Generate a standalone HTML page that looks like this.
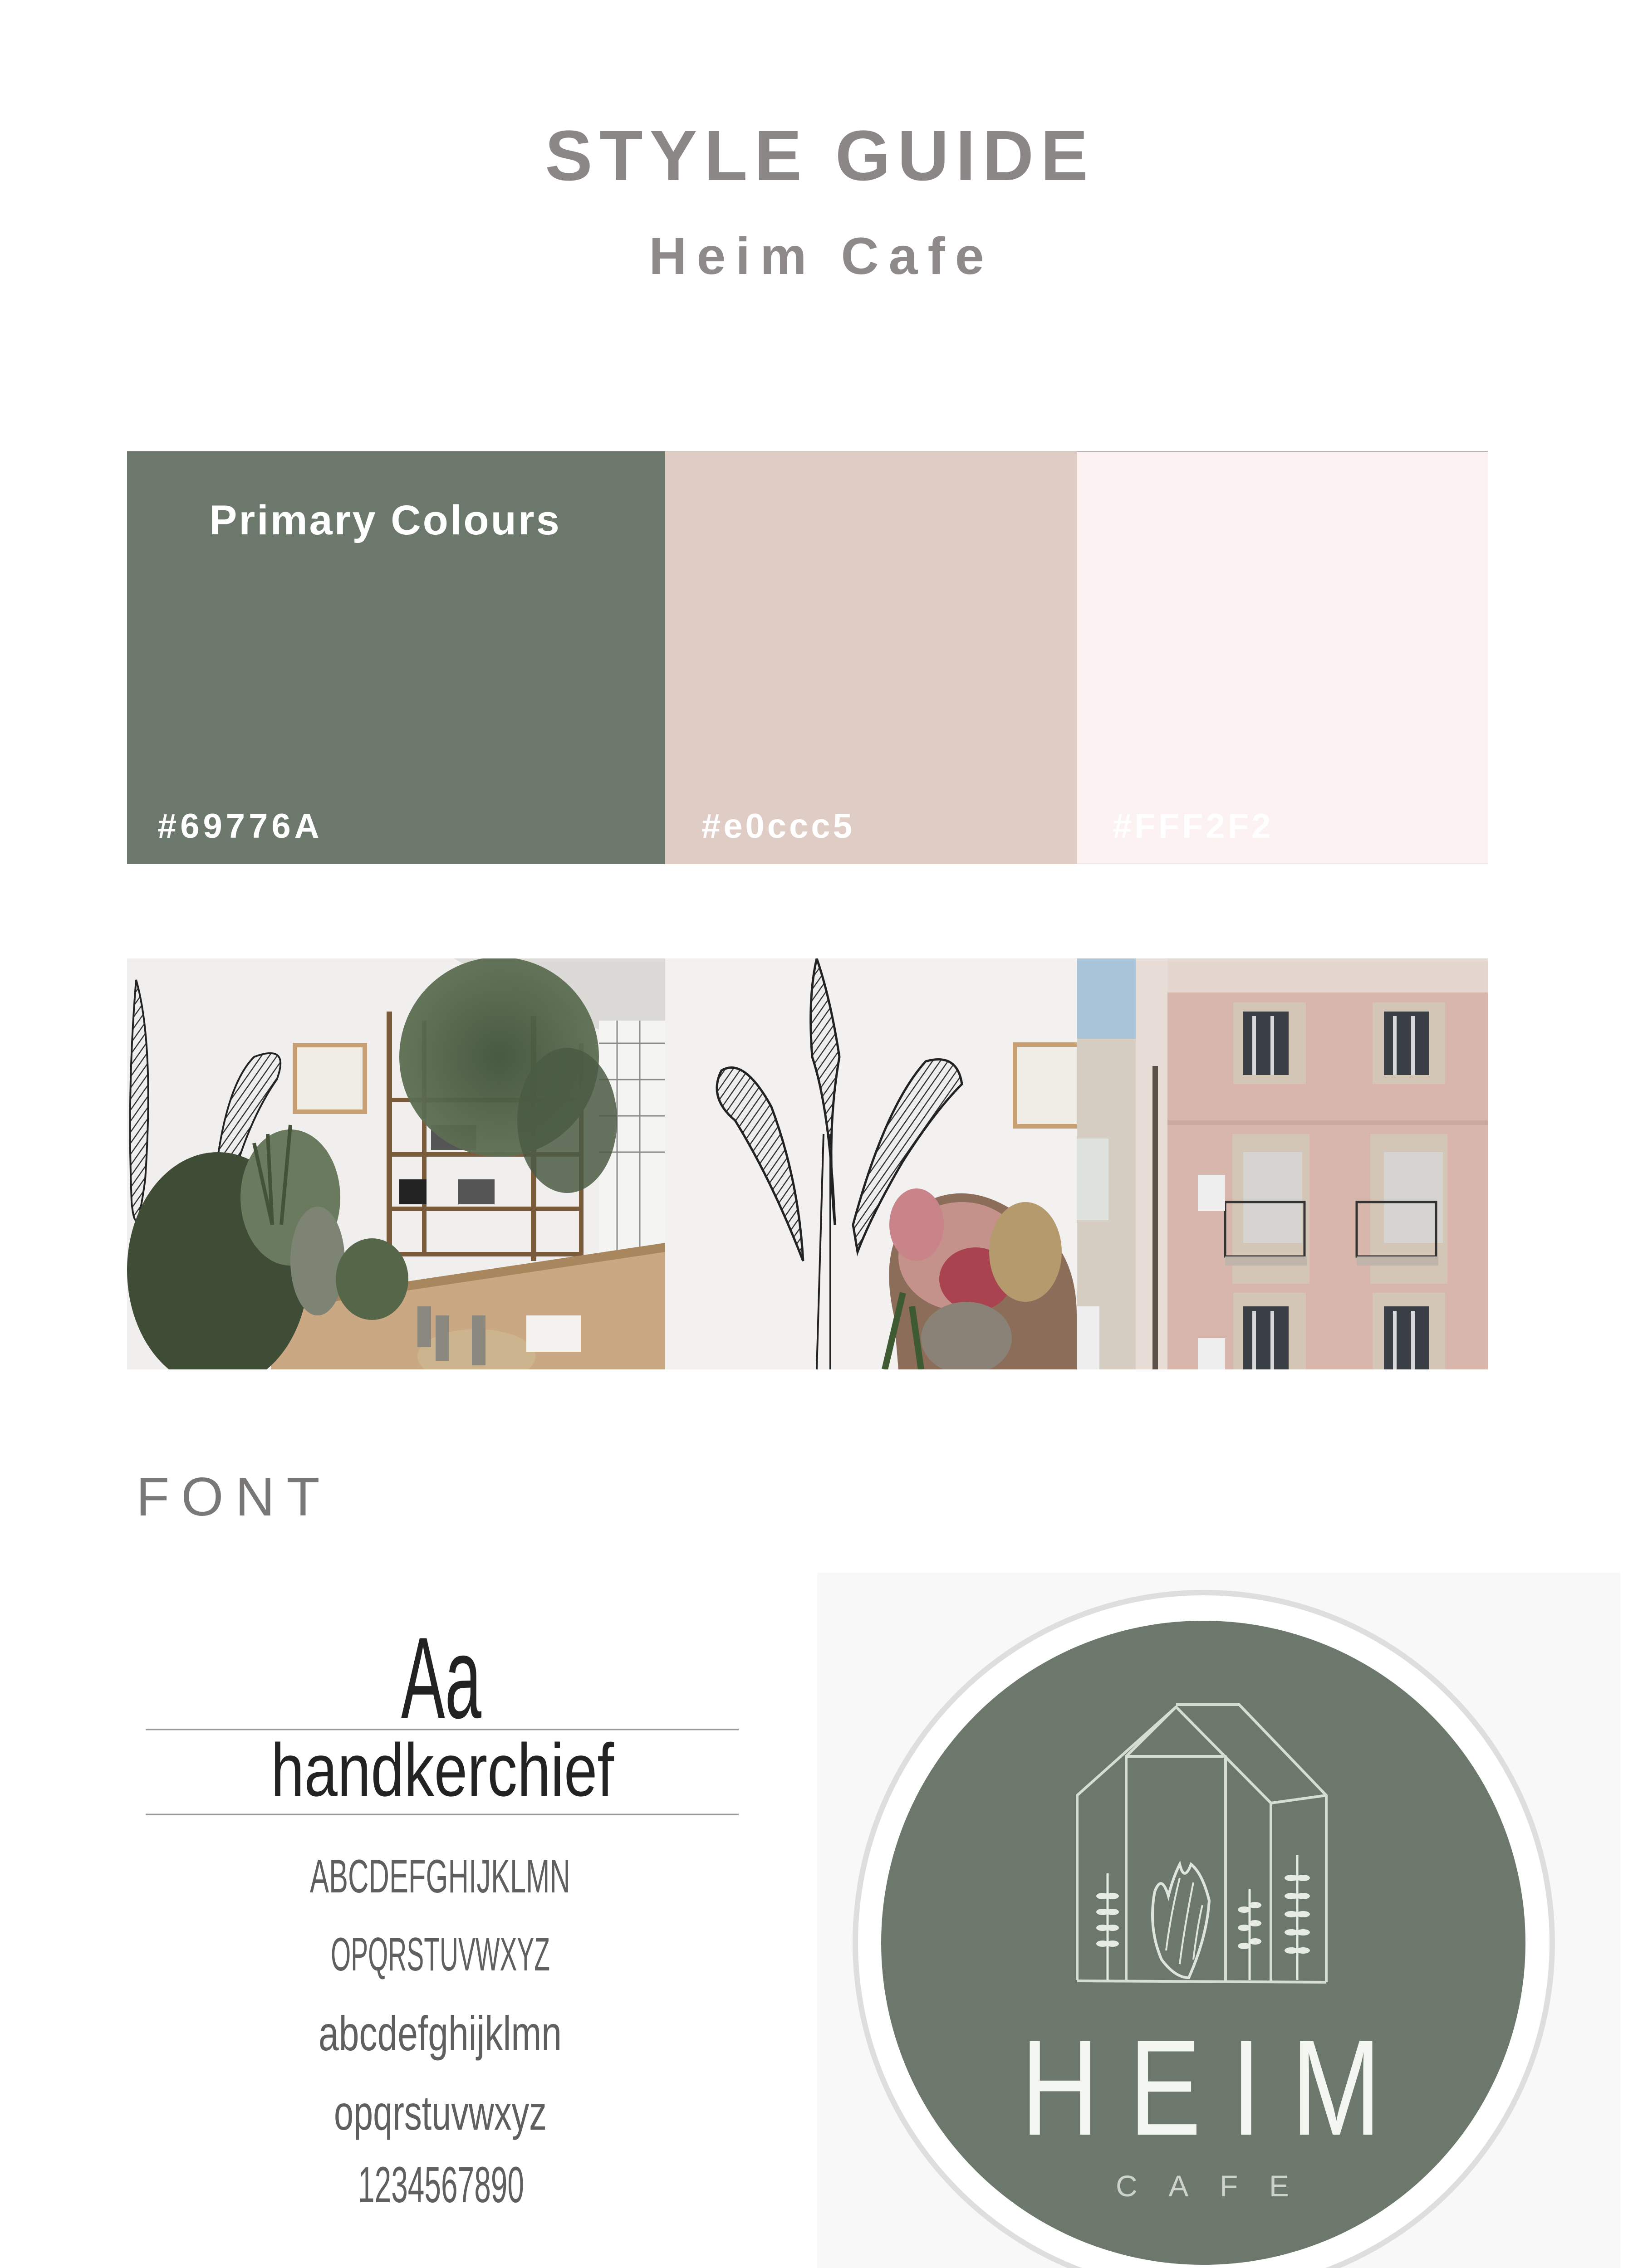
<!DOCTYPE html>
<html><head><meta charset="utf-8">
<style>
html,body{margin:0;padding:0;background:#fff;}
body{width:3599px;height:5268px;position:relative;overflow:hidden;font-family:"Liberation Sans",sans-serif;}
.t{position:absolute;white-space:nowrap;line-height:1;}
</style></head>
<body>
<div class="t" style="left:0;width:3599px;text-align:center;top:265px;font-size:157px;font-weight:bold;color:#8b8786;letter-spacing:15px;padding-left:15px;box-sizing:border-box;">STYLE GUIDE</div>
<div class="t" style="left:0;width:3599px;text-align:center;top:508px;font-size:115px;font-weight:bold;color:#8e8a89;letter-spacing:22px;padding-left:22px;box-sizing:border-box;">Heim Cafe</div>

<div style="position:absolute;left:280px;top:995px;width:1186px;height:910px;background:#6b786b;"></div>
<div style="position:absolute;left:1466px;top:995px;width:907px;height:910px;background:#dfccc5;"></div>
<div style="position:absolute;left:2373px;top:995px;width:905px;height:908px;background:#fdf2f2;border:1px solid #b9b4b3;border-left:1px solid #c9bcb8;"></div>
<div style="position:absolute;left:280px;top:994px;width:2999px;height:1px;background:#b9b4b3;"></div>

<div class="t" style="left:461px;top:1101px;font-size:92px;font-weight:bold;color:#fff;letter-spacing:4px;">Primary Colours</div>
<div class="t" style="left:347px;top:1784px;font-size:76px;font-weight:bold;color:#fff;letter-spacing:8px;">#69776A</div>
<div class="t" style="left:1546px;top:1784px;font-size:76px;font-weight:bold;color:#fff;letter-spacing:6px;">#e0ccc5</div>
<div class="t" style="left:2452px;top:1784px;font-size:76px;font-weight:bold;color:#fff;letter-spacing:6px;">#FFF2F2</div>

<div class="t" style="left:300px;top:3240px;font-size:120px;color:#7a7777;letter-spacing:26px;font-weight:normal;">FONT</div>

<svg width="3599" height="5268" viewBox="0 0 3599 5268" style="position:absolute;left:0;top:0;" xmlns="http://www.w3.org/2000/svg">
<defs>
<pattern id="hatch" width="14" height="14" patternUnits="userSpaceOnUse" patternTransform="rotate(35)">
<rect width="14" height="14" fill="#eeeeee"/><line x1="0" y1="0" x2="0" y2="14" stroke="#333" stroke-width="5"/></pattern>
<clipPath id="c1"><rect x="280" y="2113" width="1186" height="906"/></clipPath>
<clipPath id="c2"><rect x="1466" y="2113" width="907" height="906"/></clipPath>
<clipPath id="c3"><rect x="2373" y="2113" width="906" height="906"/></clipPath>
<radialGradient id="rg1" cx="0.5" cy="0.5" r="0.5"><stop offset="0" stop-color="#3f5239"/><stop offset="1" stop-color="#5d6e52"/></radialGradient>
</defs>

<!-- Photo 1 -->
<g clip-path="url(#c1)">
<rect x="280" y="2113" width="1186" height="906" fill="#f0efed"/>
<polygon points="1000,2113 1466,2113 1466,2330 1200,2220" fill="#dcdad6"/>
<rect x="1320" y="2250" width="146" height="520" fill="#f4f4f2"/>
<g stroke="#8a8a8a" stroke-width="3"><line x1="1320" y1="2300" x2="1466" y2="2300"/><line x1="1320" y1="2380" x2="1466" y2="2380"/><line x1="1320" y1="2460" x2="1466" y2="2460"/><line x1="1320" y1="2540" x2="1466" y2="2540"/><line x1="1360" y1="2250" x2="1360" y2="2770"/><line x1="1410" y1="2250" x2="1410" y2="2770"/></g>
<path d="M300 2160 Q340 2300 320 2600 Q300 2750 290 2650 Q280 2400 300 2160Z" fill="url(#hatch)" stroke="#222" stroke-width="4"/>
<path d="M470 2640 Q490 2400 560 2330 Q640 2300 610 2380 Q540 2480 500 2650Z" fill="url(#hatch)" stroke="#222" stroke-width="4"/>
<rect x="645" y="2299" width="164" height="157" fill="#c79f74"/><rect x="655" y="2309" width="144" height="137" fill="#efede6"/>
<g fill="#7a5b3c"><rect x="852" y="2230" width="12" height="560"/><rect x="930" y="2250" width="10" height="520"/><rect x="1170" y="2240" width="12" height="540"/><rect x="1276" y="2300" width="10" height="470"/>
<rect x="852" y="2420" width="430" height="10"/><rect x="852" y="2540" width="430" height="10"/><rect x="852" y="2660" width="430" height="10"/><rect x="852" y="2760" width="430" height="10"/></g>
<g fill="#555"><rect x="950" y="2480" width="100" height="55"/><rect x="1010" y="2600" width="80" height="55"/><rect x="880" y="2600" width="60" height="55" fill="#222"/></g>
<ellipse cx="1100" cy="2330" rx="220" ry="220" fill="url(#rg1)" opacity="0.95"/>
<ellipse cx="1250" cy="2470" rx="110" ry="160" fill="#4b5c44" opacity="0.85"/>
<polygon points="597,2870 1466,2740 1466,3019 597,3019" fill="#c9a883"/>
<polygon points="597,2870 1466,2740 1466,2760 597,2890" fill="#a8875f"/>
<ellipse cx="1050" cy="2990" rx="130" ry="60" fill="#cbb48e"/>
<rect x="1160" y="2900" width="120" height="80" fill="#f4f2ef"/>
<g fill="#8b8880"><rect x="920" y="2880" width="30" height="90"/><rect x="960" y="2900" width="30" height="100"/><rect x="1040" y="2900" width="30" height="110"/></g>
<ellipse cx="480" cy="2800" rx="200" ry="260" fill="#3f4c36"/>
<ellipse cx="640" cy="2640" rx="110" ry="150" fill="#6a7a5e"/>
<ellipse cx="700" cy="2780" rx="60" ry="120" fill="#7e8474"/>
<ellipse cx="820" cy="2820" rx="80" ry="90" fill="#566648"/>
<path d="M590 2500 L600 2700 M640 2480 L620 2700 M560 2520 L600 2700" stroke="#44523a" stroke-width="8"/>
</g>

<!-- Photo 2 -->
<g clip-path="url(#c2)">
<rect x="1466" y="2113" width="907" height="906" fill="#f2f1ef"/>
<path d="M1800 2113 Q1830 2200 1850 2330 Q1820 2500 1840 2700 Q1830 2450 1790 2330 Q1780 2200 1800 2113Z" fill="url(#hatch)" stroke="#222" stroke-width="5"/>
<path d="M1700 2440 Q1640 2330 1590 2360 Q1560 2420 1620 2470 Q1700 2600 1770 2780 Q1760 2600 1700 2440Z" fill="url(#hatch)" stroke="#222" stroke-width="5"/>
<path d="M1880 2700 Q1950 2440 2040 2340 Q2110 2320 2120 2390 Q2060 2450 1990 2560 Q1920 2680 1890 2760Z" fill="url(#hatch)" stroke="#222" stroke-width="5"/>
<path d="M1830 2500 L1830 3019 M1815 2500 L1800 3019" stroke="#222" stroke-width="4"/>
<rect x="2232" y="2298" width="150" height="190" fill="#c79f74"/><rect x="2242" y="2308" width="140" height="170" fill="#efede6"/>
<path d="M1970 2900 Q1930 2720 2040 2650 Q2140 2600 2250 2680 Q2373 2740 2373 2900 L2373 3019 L1980 3019Z" fill="#8c6d5a"/>
<ellipse cx="2120" cy="2770" rx="140" ry="120" fill="#c4928a"/>
<ellipse cx="2150" cy="2820" rx="80" ry="70" fill="#a8434f"/>
<ellipse cx="2020" cy="2700" rx="60" ry="80" fill="#c9848a"/>
<ellipse cx="2260" cy="2760" rx="80" ry="110" fill="#b59a6e"/>
<ellipse cx="2130" cy="2950" rx="100" ry="80" fill="#8a8276"/>
<path d="M1950 3019 L1990 2850 M2030 3019 L2010 2880" stroke="#3e5a33" stroke-width="14"/>
</g>

<!-- Photo 3 -->
<g clip-path="url(#c3)">
<rect x="2373" y="2113" width="906" height="906" fill="#d8b6ab"/>
<rect x="2373" y="2113" width="130" height="300" fill="#a9c3d9"/>
<rect x="2373" y="2290" width="130" height="729" fill="#d6cec2"/>
<rect x="2503" y="2113" width="70" height="906" fill="#e7ddd6"/>
<rect x="2573" y="2113" width="706" height="75" fill="#e4d7cf"/>
<rect x="2573" y="2470" width="706" height="10" fill="#c9a89e"/>
<g fill="#d3c6b7"><rect x="2718" y="2210" width="160" height="180"/><rect x="3025" y="2210" width="160" height="180"/><rect x="2716" y="2500" width="170" height="330"/><rect x="3020" y="2500" width="170" height="330"/><rect x="2718" y="2850" width="160" height="169"/><rect x="3025" y="2850" width="160" height="169"/></g>
<g fill="#3a3f45"><rect x="2740" y="2230" width="100" height="140"/><rect x="3050" y="2230" width="100" height="140"/><rect x="2740" y="2880" width="100" height="139"/><rect x="3050" y="2880" width="100" height="139"/></g>
<g fill="#fff" opacity="0.8"><rect x="2760" y="2240" width="8" height="130"/><rect x="2800" y="2240" width="8" height="130"/><rect x="3070" y="2240" width="8" height="130"/><rect x="3110" y="2240" width="8" height="130"/><rect x="2760" y="2890" width="8" height="130"/><rect x="2800" y="2890" width="8" height="130"/><rect x="3070" y="2890" width="8" height="130"/><rect x="3110" y="2890" width="8" height="130"/></g>
<g fill="#d6d4d0"><rect x="2740" y="2540" width="130" height="200"/><rect x="3050" y="2540" width="130" height="200"/></g>
<g fill="none" stroke="#333" stroke-width="5"><rect x="2700" y="2650" width="175" height="120"/><rect x="2990" y="2650" width="175" height="120"/></g>
<rect x="2700" y="2770" width="180" height="20" fill="#bfb5ab"/><rect x="2990" y="2770" width="180" height="20" fill="#bfb5ab"/>
<rect x="2640" y="2590" width="60" height="80" fill="#eeeeee"/><rect x="2640" y="2950" width="60" height="75" fill="#eeeeee"/>
<rect x="2373" y="2510" width="70" height="180" fill="#dfe3e0"/>
<rect x="2373" y="2880" width="50" height="139" fill="#eeeeee"/>
<rect x="2540" y="2350" width="12" height="669" fill="#5a5048"/>
</g>

<!-- Handwriting specimen -->
<g fill="#222" font-family="Liberation Sans, sans-serif">
<text x="884" y="3787" font-size="255" textLength="177" lengthAdjust="spacingAndGlyphs">Aa</text>
<text x="597" y="3959" font-size="165" textLength="756" lengthAdjust="spacingAndGlyphs">handkerchief</text>
</g>
<line x1="321" y1="3813" x2="1628" y2="3813" stroke="#9a9a9a" stroke-width="3"/>
<line x1="321" y1="4000" x2="1628" y2="4000" stroke="#9a9a9a" stroke-width="3"/>
<g fill="#5f5f5f" font-family="Liberation Sans, sans-serif">
<text x="683" y="4172" font-size="104" textLength="574" lengthAdjust="spacingAndGlyphs">ABCDEFGHIJKLMN</text>
<text x="729" y="4344" font-size="104" textLength="483" lengthAdjust="spacingAndGlyphs">OPQRSTUVWXYZ</text>
<text x="702" y="4520" font-size="108" textLength="536" lengthAdjust="spacingAndGlyphs">abcdefghijklmn</text>
<text x="736" y="4695" font-size="108" textLength="469" lengthAdjust="spacingAndGlyphs">opqrstuvwxyz</text>
<text x="789" y="4855" font-size="112" textLength="366" lengthAdjust="spacingAndGlyphs">1234567890</text>
</g>

<!-- Logo -->
<rect x="1801" y="3467" width="1770" height="1605" fill="#f8f8f8"/>
<ellipse cx="2653" cy="4283" rx="768" ry="772" fill="#ffffff" stroke="#dedede" stroke-width="12"/>
<circle cx="2652" cy="4283" r="710" fill="#6b786b"/>
<g fill="none" stroke="#d6ddd3" stroke-width="6" stroke-linejoin="round">
<polyline points="2374,4365 2374,3958 2592,3763 2801,3975 2801,4370"/>
<polyline points="2592,3758 2731,3758 2923,3958 2923,4370"/>
<line x1="2801" y1="3975" x2="2923" y2="3958"/>
<line x1="2374" y1="4367" x2="2923" y2="4370"/>
<polyline points="2482,4365 2482,3872 2701,3872 2701,4367"/>
<line x1="2482" y1="3872" x2="2592" y2="3763"/>
</g>
<g stroke="#e6ebe3" stroke-width="5" fill="none">
<line x1="2441" y1="4130" x2="2441" y2="4365"/>
<line x1="2859" y1="4090" x2="2859" y2="4365"/>
<line x1="2754" y1="4165" x2="2754" y2="4365"/>
</g>
<g fill="#e6ebe3">
<ellipse cx="2430" cy="4180" rx="14" ry="7"/><ellipse cx="2452" cy="4180" rx="14" ry="7"/>
<ellipse cx="2430" cy="4215" rx="14" ry="7"/><ellipse cx="2452" cy="4215" rx="14" ry="7"/>
<ellipse cx="2430" cy="4250" rx="14" ry="7"/><ellipse cx="2452" cy="4250" rx="14" ry="7"/>
<ellipse cx="2430" cy="4285" rx="14" ry="7"/><ellipse cx="2452" cy="4285" rx="14" ry="7"/>
<ellipse cx="2846" cy="4140" rx="15" ry="7"/><ellipse cx="2872" cy="4140" rx="15" ry="7"/>
<ellipse cx="2846" cy="4180" rx="15" ry="7"/><ellipse cx="2872" cy="4180" rx="15" ry="7"/>
<ellipse cx="2846" cy="4220" rx="15" ry="7"/><ellipse cx="2872" cy="4220" rx="15" ry="7"/>
<ellipse cx="2846" cy="4260" rx="15" ry="7"/><ellipse cx="2872" cy="4260" rx="15" ry="7"/>
<ellipse cx="2846" cy="4300" rx="15" ry="7"/><ellipse cx="2872" cy="4300" rx="15" ry="7"/>
<ellipse cx="2742" cy="4210" rx="14" ry="7"/><ellipse cx="2766" cy="4200" rx="14" ry="7"/>
<ellipse cx="2742" cy="4250" rx="14" ry="7"/><ellipse cx="2766" cy="4240" rx="14" ry="7"/>
<ellipse cx="2742" cy="4290" rx="14" ry="7"/><ellipse cx="2766" cy="4280" rx="14" ry="7"/>
</g>
<path d="M2560 4320 Q2530 4250 2545 4170 Q2560 4130 2575 4180 Q2585 4140 2600 4110 Q2610 4150 2625 4110 Q2650 4130 2665 4190 Q2660 4270 2620 4360 Q2590 4360 2560 4320Z" fill="none" stroke="#dfe5dc" stroke-width="6"/>
<path d="M2570 4300 Q2580 4220 2600 4140 M2600 4330 Q2610 4250 2630 4150 M2630 4320 Q2640 4240 2650 4200" stroke="#dfe5dc" stroke-width="4" fill="none"/>
<g fill="#f4f6f2" font-family="Liberation Sans, sans-serif">
<text transform="translate(2250,4706) scale(0.5,1)" font-size="300" textLength="1588" lengthAdjust="spacingAndGlyphs">H E I M</text>
</g>
<text x="2459" y="4842" font-size="66" fill="#cdd3cb" font-family="Liberation Sans, sans-serif" textLength="382" lengthAdjust="spacing">CAFE</text>
</svg>
</body></html>
